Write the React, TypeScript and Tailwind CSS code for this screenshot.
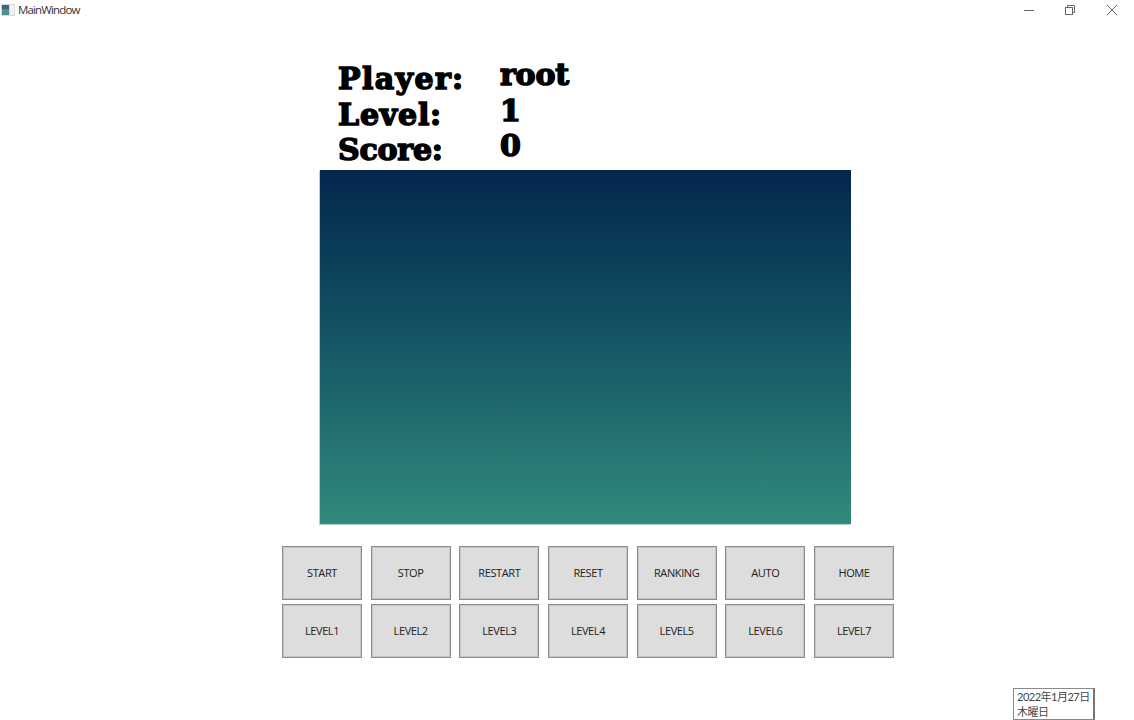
import React from "react";

const row1 = ["START", "STOP", "RESTART", "RESET", "RANKING", "AUTO", "HOME"];
const row2 = ["LEVEL1", "LEVEL2", "LEVEL3", "LEVEL4", "LEVEL5", "LEVEL6", "LEVEL7"];
const stats = [
  { label: "Player:", value: "root", cls: "tracking-[1.4px]" },
  { label: "Level:", value: "1", cls: "tracking-[0.8px]" },
  { label: "Score:", value: "0", cls: "tracking-[-0.2px]" },
];

export default function App() {
  return (
    <div className="relative flex h-[720px] w-[1134px] flex-col overflow-hidden bg-white font-['Open_Sans','Noto_Sans',sans-serif]">
      <div className="flex h-[20px] items-center text-[11.5px] tracking-[-0.85px] text-[#333]">
        <svg width="14" height="12" viewBox="0 0 14 12" className="ml-[1px] mr-[3px]">
          <rect x="0" y="0" width="14" height="12" fill="#d5dadd" />
          <rect x="1" y="1" width="7" height="10" fill="#4f8f8a" />
          <rect x="1" y="1" width="7" height="4" fill="#3d6478" />
          <rect x="9" y="1" width="4" height="10" fill="#f0f3f4" />
        </svg>
        <span>MainWindow</span>
        <div className="ml-auto flex items-center pr-[17px]">
          <svg width="10" height="1" viewBox="0 0 10 1" className="mr-[31px]">
            <rect width="10" height="1" fill="#666" />
          </svg>
          <svg width="10" height="10" viewBox="0 0 10 10" className="mr-[32px]" fill="none" stroke="#666">
            <rect x="0.5" y="2.5" width="7" height="7" />
            <path d="M2.5 2.5V0.5H9.5V7.5H7.5" />
          </svg>
          <svg width="10" height="10" viewBox="0 0 10 10" fill="none" stroke="#666">
            <path d="M0 0L10 10M10 0L0 10" />
          </svg>
        </div>
      </div>

      <div className="mt-[41px] flex h-[109px] flex-col pl-[338px] font-['DejaVu_Serif',serif] text-[30px] leading-[35.5px] font-bold text-black [-webkit-text-stroke:1.5px_black]">
        {stats.map(({ label, value, cls }) => (
          <div key={label} className="flex">
            <span className={`w-[162px] ${cls}`}>{label}</span>
            <span className="-translate-y-[4px] tracking-[-0.2px]">{value}</span>
          </div>
        ))}
      </div>

      <div className="ml-[320px] h-[354px] w-[531px] bg-gradient-to-b from-[#05264d] to-[#318b7b] shadow-[-1px_1px_0_0_#b5d0ca]" />

      <div className="mt-[22px] ml-[282px] grid w-[612px] grid-cols-7 gap-x-[8.67px] gap-y-[4px]">
        {[...row1, ...row2].map((label) => (
          <button
            key={label}
            className="flex h-[54px] items-center justify-center border border-[#8c8c8c] bg-[#dddddd] text-[11px] tracking-[-0.4px] text-[#222] shadow-[inset_0_0_0_1px_#c6c6c6]"
          >
            {label}
          </button>
        ))}
      </div>

      <div className="absolute top-[688px] left-[1013px] h-[32px] w-[82px] border border-[#8a8a8a] border-r-2 border-r-[#777] bg-white px-[3px] font-['Lato','Noto_Sans_CJK_JP',sans-serif] text-[11px] leading-[15px] tracking-[-0.5px] whitespace-nowrap text-[#444]">
        <div>2022年1月27日</div>
        <div>木曜日</div>
      </div>
    </div>
  );
}
